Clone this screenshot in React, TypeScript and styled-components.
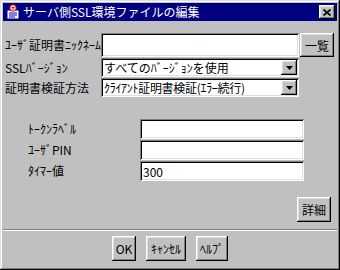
import React from "react";
import styled, { createGlobalStyle } from "styled-components";

const Global = createGlobalStyle`
  html, body { margin: 0; padding: 0; background: #c0c0c0; }
  body { font-family: "Noto Sans CJK JP", "MS UI Gothic", sans-serif; font-size: 12px; color: #000; }
  * { box-sizing: border-box; }
`;

const raised = `box-shadow: inset -1px -1px #000, inset 1px 1px #fff, inset -2px -2px #808080, inset 2px 2px #dfdfdf;`;
const sunken = `box-shadow: inset 1px 1px #808080, inset -1px -1px #fff, inset 2px 2px #000, inset -2px -2px #dfdfdf;`;

const Window = styled.div`
  width: 340px;
  height: 270px;
  background: #c0c0c0;
  padding: 3px;
  box-shadow: inset -1px -1px #000, inset 1px 1px #dfdfdf, inset -2px -2px #808080, inset 2px 2px #fff;
  display: flex;
  flex-direction: column;
`;

const TitleBar = styled.div`
  height: 18px;
  background: #000080;
  display: flex;
  align-items: center;
  padding: 0 2px 0 2px;
  color: #fff;
`;

const TitleText = styled.span`
  flex: 1;
  margin-left: 2px;
  font-size: 12px;
  line-height: 18px;
  white-space: nowrap;
`;

const CloseButton = styled.div`
  width: 16px;
  height: 14px;
  background: #c0c0c0;
  ${raised}
  display: flex;
  align-items: center;
  justify-content: center;
`;

const Row = styled.div<{ $top: number; $left: number; $h: number }>`
  display: flex;
  align-items: center;
  margin-top: ${(p) => p.$top}px;
  padding-left: ${(p) => p.$left}px;
  height: ${(p) => p.$h}px;
  flex-shrink: 0;
`;

const Label = styled.span<{ $w: number }>`
  width: ${(p) => p.$w}px;
  flex-shrink: 0;
  white-space: nowrap;
  line-height: 14px;
`;

const Field = styled.div<{ $w: number }>`
  width: ${(p) => p.$w}px;
  height: 100%;
  background: #fff;
  ${sunken}
  padding: 0 3px;
  display: flex;
  align-items: center;
  white-space: nowrap;
  overflow: hidden;
`;

const Combo = styled.div<{ $w: number }>`
  width: ${(p) => p.$w}px;
  height: 100%;
  background: #fff;
  ${sunken}
  padding: 2px 2px 2px 3px;
  display: flex;
  align-items: center;
  white-space: nowrap;
`;

const ComboText = styled.span<{ $tight?: boolean }>`
  flex: 1;
  overflow: hidden;
  letter-spacing: ${(p) => (p.$tight ? "-0.3px" : "0")};
`;

const ArrowButton = styled.div`
  width: 16px;
  height: 15px;
  background: #c0c0c0;
  ${raised}
  display: flex;
  align-items: center;
  justify-content: center;
`;

const Button = styled.div<{ $w: number; $h: number; $ml?: number }>`
  width: ${(p) => p.$w}px;
  height: ${(p) => p.$h}px;
  margin-left: ${(p) => p.$ml ?? 0}px;
  background: #c0c0c0;
  ${raised}
  display: flex;
  align-items: center;
  justify-content: center;
  white-space: nowrap;
  flex-shrink: 0;
`;

const RightRow = styled.div<{ $top: number }>`
  display: flex;
  justify-content: flex-end;
  padding-right: 6px;
  margin-top: ${(p) => p.$top}px;
`;

const Separator = styled.div<{ $top: number }>`
  margin-top: ${(p) => p.$top}px;
  height: 2px;
  border-top: 1px solid #808080;
  border-bottom: 1px solid #fff;
`;

const ButtonBar = styled.div<{ $top: number; $left: number }>`
  display: flex;
  gap: 10px;
  margin-top: ${(p) => p.$top}px;
  padding-left: ${(p) => p.$left}px;
`;

const Arrow = () => (
  <svg width="7" height="4" viewBox="0 0 7 4">
    <path d="M0 0h7L3.5 4z" fill="#000" />
  </svg>
);

const CloseX = () => (
  <svg width="8" height="7" viewBox="0 0 8 7">
    <path d="M0.5 0.5L7.5 6.5M7.5 0.5L0.5 6.5" stroke="#000" strokeWidth="1.6" />
  </svg>
);

const CertIcon = () => (
  <svg width="16" height="16" viewBox="0 0 16 16">
    <rect x="2" y="6" width="12" height="9" fill="#fff" stroke="#000080" />
    <path d="M4 9h8M4 11h8M4 13h6" stroke="#0000c0" />
    <circle cx="8" cy="4" r="3.2" fill="#fff" stroke="#e00000" />
    <path d="M6.5 3.5h3M6.5 5h3" stroke="#e00000" />
  </svg>
);

export default function App() {
  return (
    <>
      <Global />
      <Window>
        <TitleBar>
          <CertIcon />
          <TitleText>サーバ側SSL環境ファイルの編集</TitleText>
          <CloseButton>
            <CloseX />
          </CloseButton>
        </TitleBar>

        <Row $top={12} $left={2} $h={24}>
          <Label $w={96}>ﾕｰｻﾞ証明書ﾆｯｸﾈｰﾑ</Label>
          <Field $w={198} />
          <Button $w={34} $h={24} $ml={1}>一覧</Button>
        </Row>

        <Row $top={1} $left={2} $h={19}>
          <Label $w={96}>SSLﾊﾞｰｼﾞｮﾝ</Label>
          <Combo $w={198}>
            <ComboText>すべてのﾊﾞｰｼﾞｮﾝを使用</ComboText>
            <ArrowButton>
              <Arrow />
            </ArrowButton>
          </Combo>
        </Row>

        <Row $top={1} $left={2} $h={19}>
          <Label $w={96}>証明書検証方法</Label>
          <Combo $w={198}>
            <ComboText $tight>ｸﾗｲｱﾝﾄ証明書検証(ｴﾗｰ続行)</ComboText>
            <ArrowButton>
              <Arrow />
            </ArrowButton>
          </Combo>
        </Row>

        <Row $top={22} $left={25} $h={20}>
          <Label $w={112}>ﾄｰｸﾝﾗﾍﾞﾙ</Label>
          <Field $w={164} />
        </Row>
        <Row $top={1} $left={25} $h={20}>
          <Label $w={112}>ﾕｰｻﾞPIN</Label>
          <Field $w={164} />
        </Row>
        <Row $top={1} $left={25} $h={20}>
          <Label $w={112}>ﾀｲﾏｰ値</Label>
          <Field $w={164}>300</Field>
        </Row>

        <RightRow $top={16}>
          <Button $w={34} $h={25}>詳細</Button>
        </RightRow>

        <Separator $top={7} />

        <ButtonBar $top={5} $left={109}>
          <Button $w={24} $h={25}>OK</Button>
          <Button $w={40} $h={25}>ｷｬﾝｾﾙ</Button>
          <Button $w={32} $h={25}>ﾍﾙﾌﾟ</Button>
        </ButtonBar>
      </Window>
    </>
  );
}
